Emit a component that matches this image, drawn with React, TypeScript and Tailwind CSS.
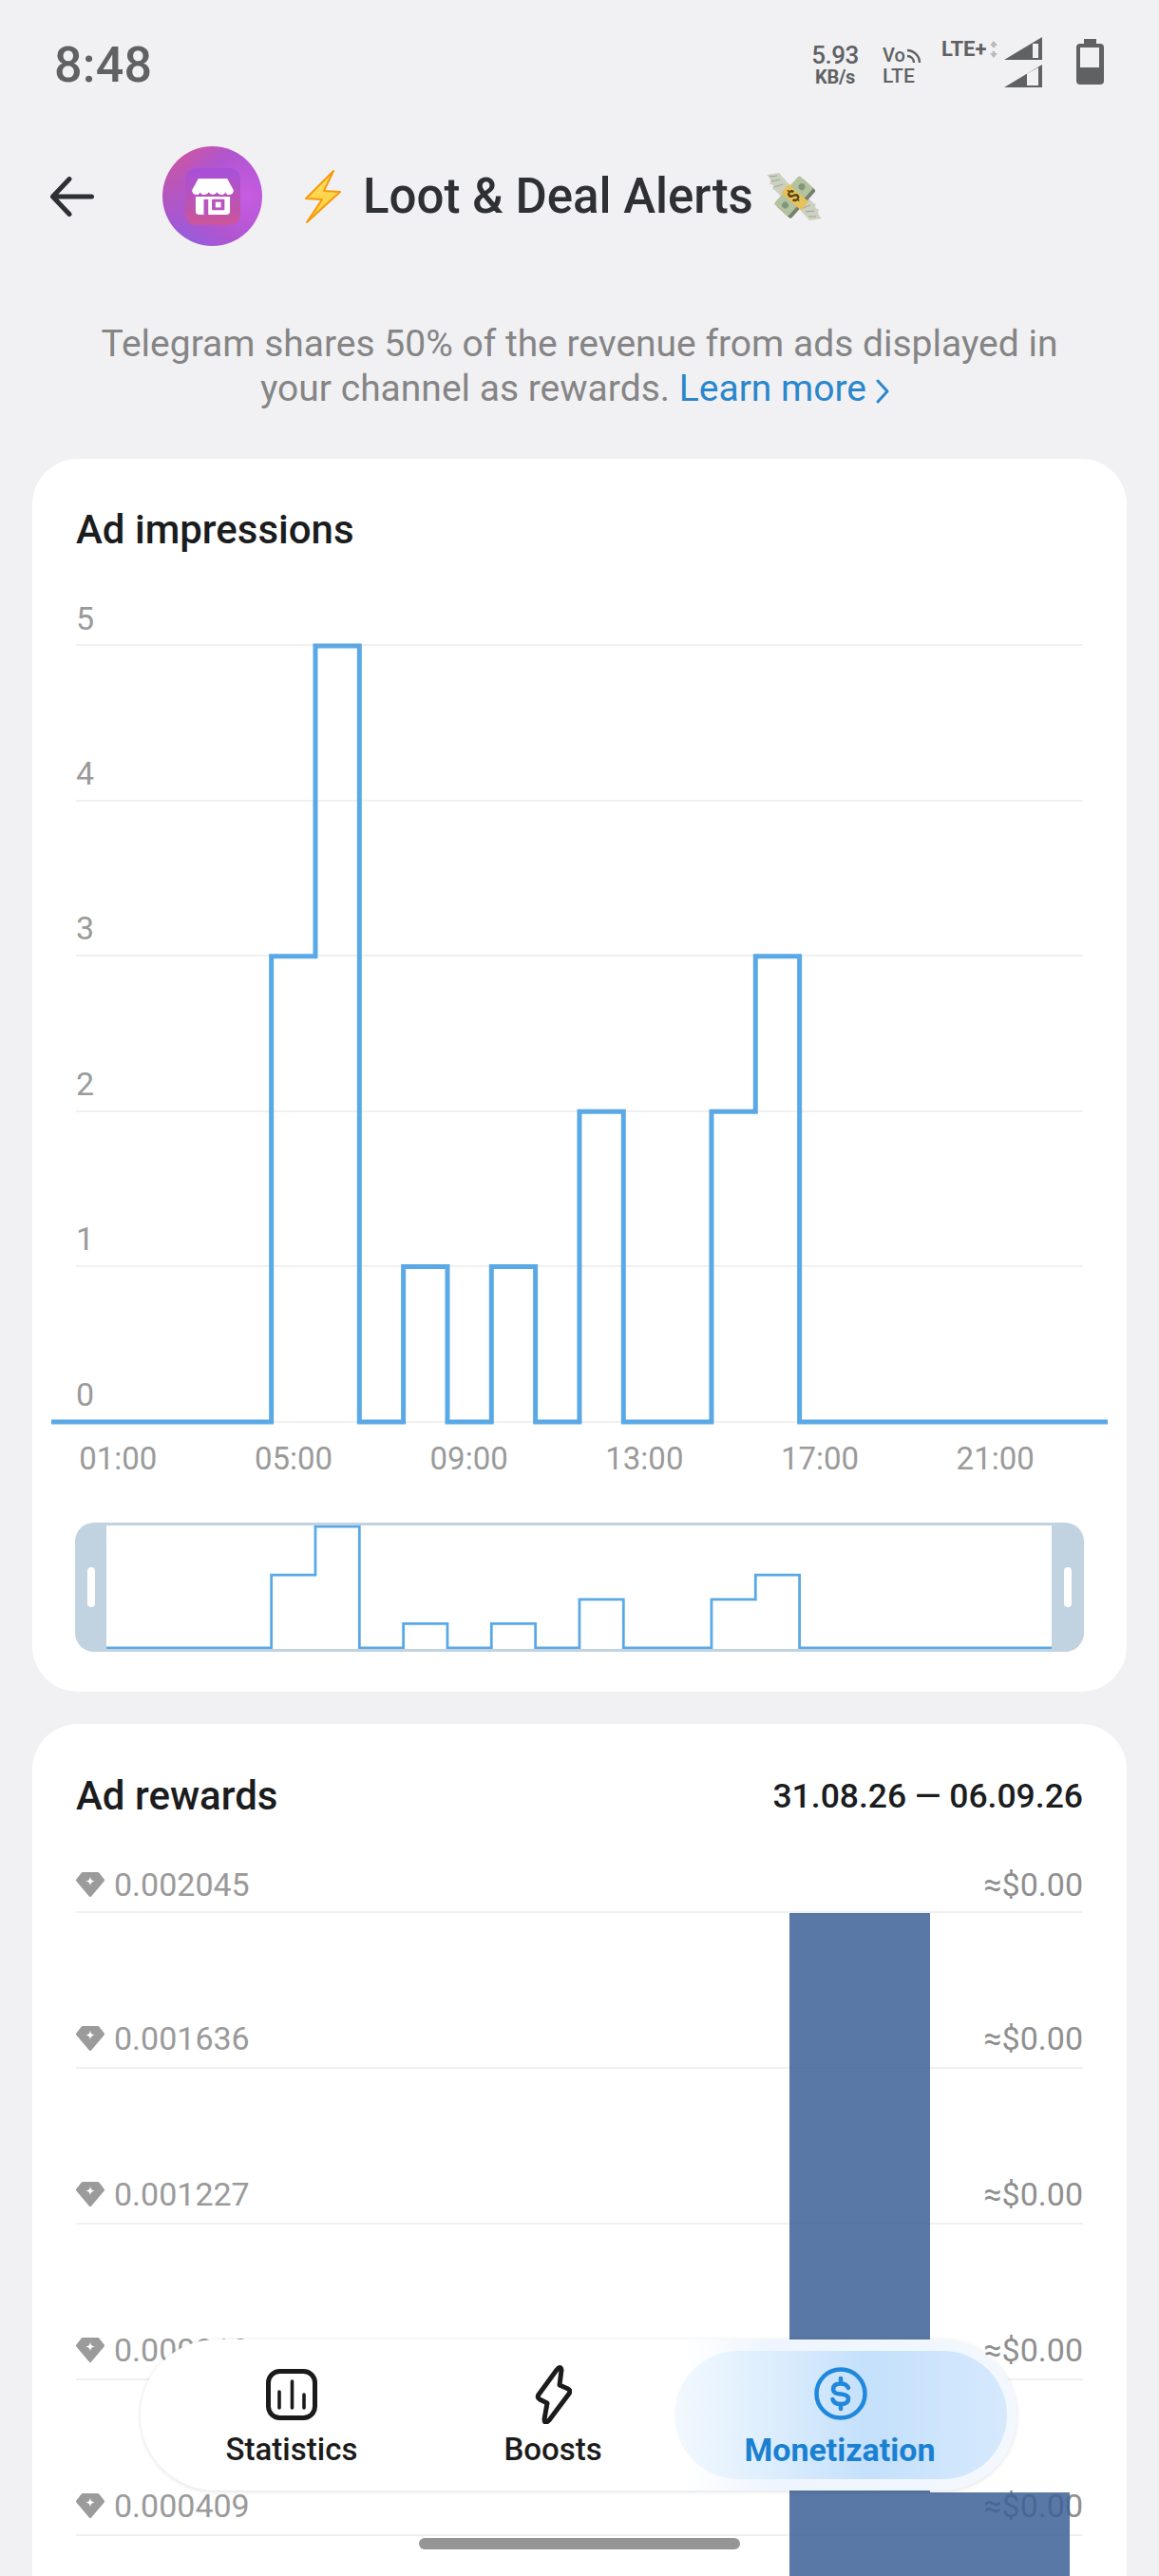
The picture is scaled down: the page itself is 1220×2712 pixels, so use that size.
import React from "react";

const STEP = 46.33;
const VALUES = [0, 0, 0, 0, 0, 3, 5, 0, 1, 0, 1, 0, 2, 0, 0, 2, 3, 0];

function stepPoints(startX: number, endX: number, base: number, unit: number) {
  const pts: string[] = [`${startX},${base}`];
  let prev = 0;
  VALUES.forEach((v, i) => {
    const x = 54 + i * STEP;
    if (v !== prev) {
      pts.push(`${x},${base - prev * unit}`);
      pts.push(`${x},${base - v * unit}`);
      prev = v;
    }
  });
  pts.push(`${endX},${base}`);
  return pts.join(" ");
}

function Gem() {
  return (
    <svg viewBox="0 0 30 26" className="w-[30px] h-[26px] shrink-0">
      <path d="M7 1.5H23L28.5 8.5L15 24.5L1.5 8.5Z" fill="#9b9b9b" stroke="#9b9b9b" strokeWidth="3" strokeLinejoin="round" />
      <path d="M15 4.5C15.6 8 16.5 9 20 9.5C16.5 10 15.6 11 15 14.5C14.4 11 13.5 10 10 9.5C13.5 9 14.4 8 15 4.5Z" fill="#fff" />
    </svg>
  );
}

function StatusBar() {
  return (
    <div className="h-[154px] flex items-start justify-between pl-[57px] pr-[58px] pt-[38px] shrink-0 text-[#606163]">
      <span className="text-[52px] leading-[61px] font-medium tracking-[0.2px]">8:48</span>
      <div className="flex items-start pt-[7px]">
        <div className="flex flex-col items-center w-[46px] font-medium">
          <span className="text-[26px] leading-[26px] tracking-[-0.5px]">5.93</span>
          <span className="text-[20px] leading-[20px] font-bold tracking-[-0.3px]">KB/s</span>
        </div>
        <div className="flex flex-col ml-[27px] w-[44px] font-medium">
          <div className="flex items-center h-[25px]">
            <span className="text-[20px] leading-[24px]">Vo</span>
            <svg viewBox="0 0 16 16" className="w-[16px] h-[16px] ml-[1px] mt-[3px]" fill="none" stroke="#606163" strokeWidth="2.4">
              <path d="M1 2C8 2 14 8 14 15" />
              <path d="M1 8C5 8 8 11 8 15" />
            </svg>
          </div>
          <span className="text-[21px] leading-[21px] tracking-[0.2px]">LTE</span>
        </div>
        <div className="flex items-center ml-[18px] -mt-[5px] w-[62px]">
          <span className="text-[22px] leading-[24px] font-bold whitespace-nowrap">LTE+</span>
          <svg viewBox="0 0 8 18" className="w-[8px] h-[18px] ml-[4px]" fill="#b9babc">
            <path d="M4 0L8 5H0Z" />
            <path d="M4 18L8 13H0Z" />
            <rect x="2.5" y="4" width="3" height="3" />
            <rect x="2.5" y="11" width="3" height="3" />
          </svg>
        </div>
        <div className="flex flex-col gap-[5px] ml-[4px] -mt-[6px]">
          <svg viewBox="0 0 40 24" className="w-[40px] h-[24px]">
            <path d="M0 24L40 0V24Z" fill="#606163" />
            <rect x="30" y="7" width="6" height="15" fill="#f1f1f4" />
          </svg>
          <svg viewBox="0 0 40 24" className="w-[40px] h-[24px]">
            <path d="M0 24L40 0V24Z" fill="#606163" />
            <path d="M24 22V9.5L36 3V22Z" fill="#f1f1f4" />
          </svg>
        </div>
        <svg viewBox="0 0 29 48" className="w-[29px] h-[48px] ml-[36px] -mt-[4px]">
          <rect x="8" y="0" width="13" height="7" fill="#606163" />
          <rect x="0" y="5" width="29" height="43" rx="4" fill="#606163" />
          <rect x="4" y="9" width="20" height="21" fill="#f1f1f4" />
        </svg>
      </div>
    </div>
  );
}

function Avatar() {
  return (
    <div className="w-[105px] h-[105px] rounded-full bg-[radial-gradient(circle_at_85%_50%,#c65ce2_0%,#b155d0_45%,transparent_75%),linear-gradient(170deg,#d0559d_0%,#a957cf_60%,#8a60e2_100%)] flex items-center justify-center shrink-0">
      <div className="w-[58px] h-[60px] rounded-[12px] bg-[linear-gradient(180deg,#a650da_0%,#cb5699_100%)] flex items-center justify-center">
        <svg viewBox="0 0 46 40" className="w-[44px] h-[38px]">
          <path d="M7 0H39L46 13Q46 18 41 18Q38 18 37 15Q36 18 32 18Q29 18 27.500 15Q26 18 23 18Q20 18 18.500 15Q17 18 14 18Q10 18 9 15Q8 18 5 18Q0 18 0 13Z" fill="#fff" />
          <path d="M4 20H42V36Q42 40 38 40H8Q4 40 4 36Z" fill="#fff" />
          <rect x="13" y="23" width="5" height="17" fill="#b955bf" />
          <rect x="22" y="23" width="14" height="12" rx="1" fill="#b955bf" />
          <rect x="26" y="26" width="6" height="6" fill="#fff" />
        </svg>
      </div>
    </div>
  );
}

function BoltEmoji() {
  return (
    <svg viewBox="0 0 40 56" className="w-[40px] h-[56px] shrink-0">
      <defs>
        <linearGradient id="bolt" x1="0" y1="0" x2="0" y2="1">
          <stop offset="0" stopColor="#ffe066" />
          <stop offset="1" stopColor="#ffc933" />
        </linearGradient>
      </defs>
      <path d="M31 1L2 30L19 31L3 55L38 23L21 22Z" fill="url(#bolt)" stroke="#f59a0c" strokeWidth="2" strokeLinejoin="round" />
    </svg>
  );
}

function MoneyEmoji() {
  return (
    <svg viewBox="0 0 58 52" className="w-[58px] h-[52px] shrink-0">
      <path d="M0 3L13 1L28 18L17 30Q12 20 6 18Q9 13 3 13Q6 8 0 3Z" fill="#ccd0c0" />
      <path d="M58 49L45 51L30 34L41 22Q46 32 52 34Q49 39 55 39Q52 44 58 49Z" fill="#ccd0c0" />
      <path d="M3 5L11 4M5 10L14 8M8 16L17 13M52 47L44 47M50 41L41 42M46 35L38 38" stroke="#a0a492" strokeWidth="1" />
      <g transform="rotate(-48 29 26)">
        <rect x="9" y="19" width="40" height="20" rx="2" fill="#76806c" />
        <rect x="9" y="15" width="40" height="20" rx="2" fill="#b3c3a0" />
        <circle cx="16" cy="25" r="3.500" fill="#84967a" />
        <circle cx="42" cy="25" r="3.500" fill="#84967a" />
        <rect x="23" y="13" width="12" height="28" fill="#e6c25a" />
        <text x="29" y="31" textAnchor="middle" fontSize="18" fontWeight="700" fill="#5b4416" fontFamily="Roboto, sans-serif">$</text>
      </g>
    </svg>
  );
}

function Header() {
  return (
    <div className="h-[105px] flex items-center pl-[53px] shrink-0">
      <svg viewBox="0 0 46 42" className="w-[46px] h-[42px] shrink-0" fill="none" stroke="#2e3134" strokeWidth="5" strokeLinecap="round" strokeLinejoin="round">
        <path d="M43.500 21H4M20 2.500L2.500 21L20 39.500" />
      </svg>
      <div className="ml-[72px]">
        <Avatar />
      </div>
      <div className="ml-[44px] flex items-center">
        <BoltEmoji />
      </div>
      <span className="ml-[22px] text-[51px] leading-[60px] font-medium text-[#2e3033] whitespace-nowrap">Loot &amp; Deal Alerts</span>
      <div className="ml-[14px]">
        <MoneyEmoji />
      </div>
    </div>
  );
}

function ImpressionsCard() {
  const rows = ["4", "3", "2", "1", "0"];
  return (
    <section className="mx-[34px] mt-[50px] bg-white rounded-[48px] px-[46px] pt-[51px] pb-[42px] shrink-0">
      <h2 className="text-[42px] leading-[48px] font-medium text-[#1b1c1e]">Ad impressions</h2>
      <div className="relative mt-[49px]">
        <div className="h-[49px] border-b-2 border-[#f0f0f0] text-[34px] leading-[40px] text-[#9a9a9a]">5</div>
        {rows.map((r) => (
          <div key={r} className="h-[163.6px] border-b-2 border-[#f0f0f0] flex items-end pb-[8px] text-[34px] leading-[40px] text-[#9a9a9a]">
            {r}
          </div>
        ))}
        <svg viewBox="54 676 1112 826" className="absolute left-[-26px] top-[45px] w-[1112px] h-[826px]" fill="none">
          <polyline points={stepPoints(54, 1166, 1497, 163.4)} stroke="#5aa9e6" strokeWidth="5" strokeLinejoin="miter" strokeLinecap="round" />
        </svg>
      </div>
      <div className="flex ml-[-48px] mt-[18px] text-[33px] leading-[40px] text-[#9a9a9a]">
        {["01:00", "05:00", "09:00", "13:00", "17:00", "21:00"].map((t) => (
          <div key={t} className="w-[185px] text-center">{t}</div>
        ))}
      </div>
      <div className="flex h-[136px] mt-[47px] -mx-px rounded-[20px] overflow-hidden">
        <div className="w-[33px] bg-[#c1d2e0] flex items-center justify-center shrink-0">
          <div className="w-[8px] h-[42px] rounded-full bg-white" />
        </div>
        <div className="flex-1 border-y-[3px] border-[#c1d2e0] bg-white">
          <svg viewBox="112 1606 995 130" className="w-full h-full block" fill="none" preserveAspectRatio="none">
            <polyline points={stepPoints(112, 1107, 1735, 25.6)} stroke="#5aa9e6" strokeWidth="2.800" strokeLinejoin="miter" />
          </svg>
        </div>
        <div className="w-[34px] bg-[#c1d2e0] flex items-center justify-center shrink-0">
          <div className="w-[8px] h-[42px] rounded-full bg-white" />
        </div>
      </div>
    </section>
  );
}

function RewardsCard() {
  const rows = ["0.001636", "0.001227", "0.000818", "0.000409"];
  return (
    <section className="mx-[34px] mt-[34px] bg-white rounded-t-[48px] px-[46px] pt-[52px] flex-1 flex flex-col">
      <div className="flex items-center justify-between">
        <h2 className="text-[42px] leading-[48px] font-medium text-[#1b1c1e]">Ad rewards</h2>
        <span className="text-[35.500px] leading-[48px] font-medium text-[#1b1c1e]">31.08.26 — 06.09.26</span>
      </div>
      <div className="relative mt-[49px] flex-1">
        <div className="h-[50px] border-b-2 border-[#f0f0f0] flex items-start justify-between text-[34px] leading-[40px]">
          <div className="flex items-center gap-[10px] text-[#9a9a9a]"><Gem /><span>0.002045</span></div>
          <span className="text-[#8f8f8f]">≈$0.00</span>
        </div>
        {rows.map((r) => (
          <div key={r} className="h-[163.9px] border-b-2 border-[#f0f0f0] flex items-end justify-between pb-[10px] text-[34px] leading-[40px]">
            <div className="flex items-center gap-[10px] text-[#9a9a9a]"><Gem /><span>{r}</span></div>
            <span className="text-[#8f8f8f]">≈$0.00</span>
          </div>
        ))}
        <div className="absolute left-[751px] top-[50px] bottom-0 w-[148px] bg-[#3c6097]/85" />
        <div className="absolute left-[899px] top-[660px] bottom-0 w-[147px] bg-[#3c6097]/85" />
      </div>
    </section>
  );
}

function BottomNav() {
  return (
    <div className="absolute left-[148px] top-[2463px] w-[922px] h-[159px] rounded-full bg-[linear-gradient(90deg,#ffffff_62%,#eef5fe_72%,#f3f8fe_100%)] shadow-[0_1px_5px_rgba(0,0,0,0.13)] flex items-stretch py-[12px] pr-[10px]">
      <div className="w-[318px] flex flex-col items-center pt-[15px]">
        <svg viewBox="0 0 54 54" className="w-[54px] h-[54px] mt-[4px] mb-[11px]" fill="none" stroke="#1b1b1b">
          <rect x="2.500" y="2.500" width="49" height="49" rx="12" strokeWidth="5" />
          <path d="M14 24V41M27.500 13V41M40 27V41" strokeWidth="3.600" strokeLinecap="round" />
        </svg>
        <span className="text-[33px] leading-[40px] font-medium text-[#1b1b1b]">Statistics</span>
      </div>
      <div className="w-[232px] flex flex-col items-center pt-[15px]">
        <svg viewBox="0 0 40 62" className="w-[40px] h-[62px] mb-[7px]" fill="none" stroke="#1b1b1b" strokeWidth="5" strokeLinejoin="round">
          <path d="M24 5Q28 0 29 5L27 21L36 25Q39 27 37 30L16 58Q11 63 11 57L14 40L6 36Q3 34 5 31Z" />
        </svg>
        <span className="text-[33px] leading-[40px] font-medium text-[#1b1b1b]">Boosts</span>
      </div>
      <div className="ml-[12px] w-[350px] rounded-full bg-[linear-gradient(90deg,#f2f9fe_0%,#dcedfd_30%,#c4e0fb_58%,#d6e9fd_100%)] flex flex-col items-center pt-[17px]">
        <svg viewBox="0 0 56 56" className="w-[56px] h-[56px] mb-[11px]" fill="none" stroke="#1f87dc" strokeLinecap="round">
          <circle cx="28" cy="28" r="25.500" strokeWidth="4.500" />
          <path d="M36 22Q34 17.500 28 17.500Q20 17.500 20 23.500Q20 28 28 28.500Q36 29 36 33.500Q36 39 28 39Q21 39 19.500 34M28 12V17M28 39V44" strokeWidth="4.500" />
        </svg>
        <span className="text-[34px] leading-[40px] font-bold text-[#1a80d2] -ml-[2px]">Monetization</span>
      </div>
    </div>
  );
}

export default function App() {
  return (
    <div className="relative w-[1220px] h-[2712px] overflow-hidden bg-[#f1f1f4] flex flex-col [font-family:Roboto,sans-serif]">
      <StatusBar />
      <Header />
      <p className="mt-[80px] text-center text-[39px] leading-[47px] text-[#858585] shrink-0">
        Telegram shares 50% of the revenue from ads displayed in
        <br />
        your channel as rewards. <span className="text-[#2a87cc]">Learn more</span>
        <svg viewBox="0 0 14 26" className="inline-block w-[14px] h-[26px] ml-[10px] mr-[10px] align-[-3px]" fill="none" stroke="#2a87cc" strokeWidth="3" strokeLinecap="round" strokeLinejoin="round">
          <path d="M2 2L12 13L2 24" />
        </svg>
      </p>
      <ImpressionsCard />
      <RewardsCard />
      <BottomNav />
      <div className="absolute left-[441px] top-[2672px] w-[338px] h-[12px] rounded-full bg-[#959595]" />
    </div>
  );
}
